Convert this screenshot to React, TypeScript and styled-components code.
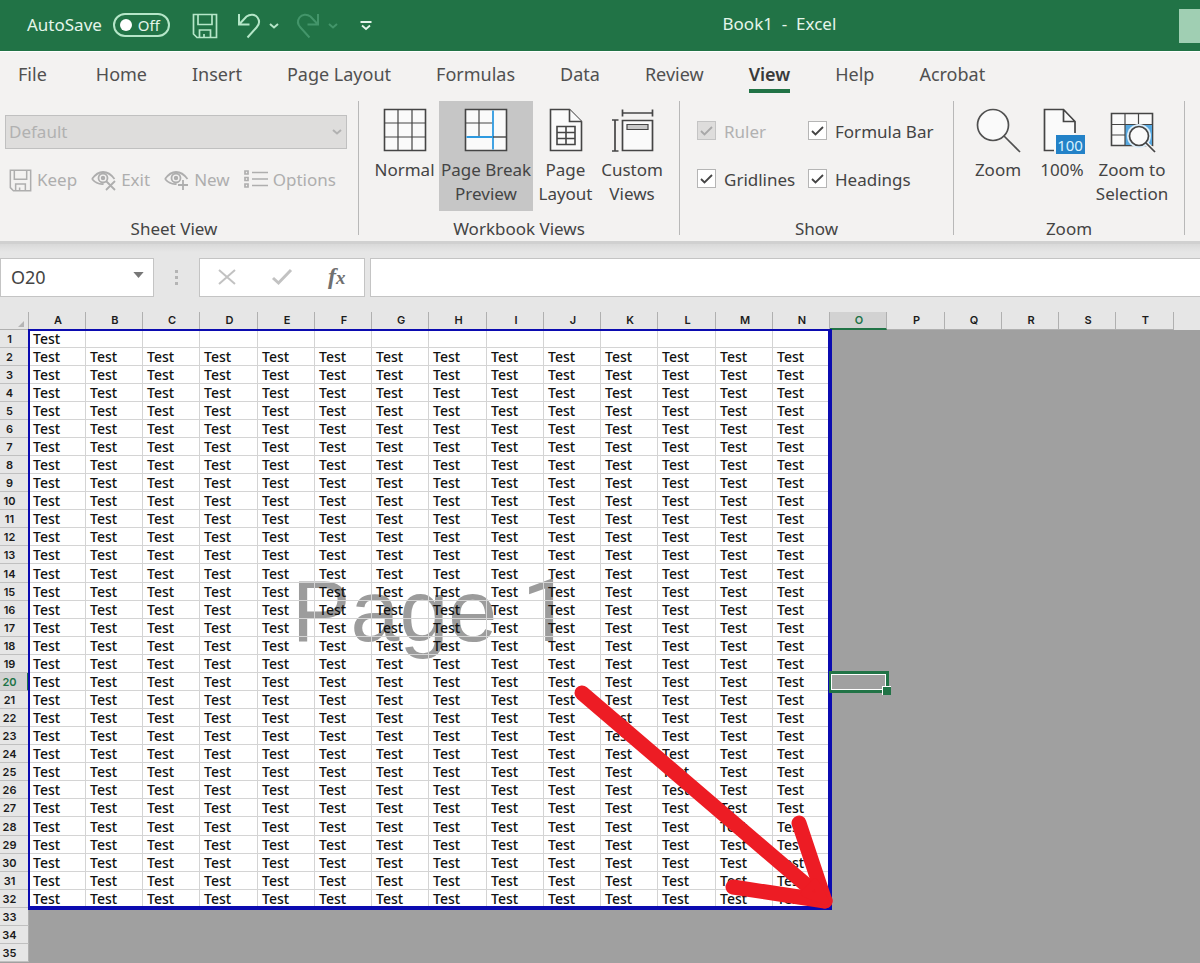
import React from "react";
import styled, { createGlobalStyle, css } from "styled-components";

const GlobalStyle = createGlobalStyle`
  *, *::before, *::after { box-sizing: border-box; }
  html, body { margin: 0; padding: 0; }
  body {
    font-family: "Noto Sans", "Open Sans", sans-serif;
    font-size: 17px;
    line-height: 24px;
    color: #444;
    overflow: hidden;
  }
  button, input, select { font: inherit; color: inherit; }
  svg { display: block; flex: none; overflow: visible; }
`;

const Page = styled.div`
  display: flex;
  flex-direction: column;
  height: 100vh;
  background: #e6e6e6;
`;

/* ---------- Title bar ---------- */

const TitleBar = styled.header`
  display: flex;
  align-items: center;
  height: 51px;
  background: #217346;
  color: #e4f5ea;
`;

const AutoSave = styled.label`
  display: flex;
  align-items: center;
  gap: 11px;
  padding: 0 0 2px 27px;
`;

const Switch = styled.button`
  display: flex;
  align-items: center;
  justify-content: space-between;
  width: 57px;
  height: 24px;
  padding: 0 8px 0 5px;
  border: 2px solid #b5e6c8;
  border-radius: 12px;
  background: transparent;
  font-size: 15px;
  line-height: 20px;
`;

const Knob = styled.span`
  width: 12px;
  height: 12px;
  border-radius: 50%;
  background: #fff;
`;

const QuickTools = styled.div`
  display: flex;
  align-items: center;
  padding-left: 22px;
`;

const QuickButton = styled.button<{ $gap?: number; $faded?: boolean }>`
  display: flex;
  padding: 0;
  margin-left: ${(p) => p.$gap ?? 0}px;
  border: 0;
  background: transparent;
  color: ${(p) => (p.$faded ? "#43956a" : "#b5e6c8")};
`;

const DocTitle = styled.h1`
  flex: 1;
  margin: 0;
  padding: 0 0 4px 8px;
  font-size: 17px;
  font-weight: 400;
  line-height: 24px;
  text-align: center;
  white-space: pre;
`;

const SearchStub = styled.div`
  width: 21px;
  height: 34px;
  background: #a0cfb3;
`;

/* ---------- Ribbon ---------- */

const Tabs = styled.nav`
  display: flex;
  align-items: flex-start;
  gap: 45px;
  height: 48px;
  padding: 10px 18px 0;
  border-top: 1px solid #fff;
  background: #f3f2f1;
  font-size: 18px;
`;

const Tab = styled.a<{ $active?: boolean }>`
  height: 31px;
  color: #505050;
  text-decoration: none;
  white-space: nowrap;
  &:first-child { margin-right: 4px; }
  ${(p) =>
    p.$active &&
    css`
      border-bottom: 4px solid #217346;
      color: #3a3a3a;
      font-weight: 600;
    `}
`;

const Ribbon = styled.div`
  display: flex;
  height: 145px;
  padding-top: 2px;
  border-bottom: 3px solid #d0d0d0;
  background: #f3f2f1;
`;

const Group = styled.section<{ $width: number }>`
  display: flex;
  flex-direction: column;
  width: ${(p) => p.$width}px;
  height: 134px;
  flex: none;
  border-right: 1px solid #b8b8b8;
`;

const GroupBody = styled.div<{ $pad?: number }>`
  display: flex;
  flex: 1;
  padding-left: ${(p) => p.$pad ?? 0}px;
`;

const GroupName = styled.h2<{ $shift?: number }>`
  margin: 0;
  padding-right: ${(p) => p.$shift ?? 0}px;
  font-size: 17px;
  font-weight: 400;
  line-height: 12px;
  text-align: center;
`;

const SheetViewBody = styled.div`
  flex: 1;
  padding: 14px 11px 0 5px;
`;

const SelectWrap = styled.div`
  display: grid;
  align-items: center;
  > * { grid-area: 1 / 1; }
  > svg { justify-self: end; margin-right: 5px; }
`;

const ViewSelect = styled.select`
  width: 100%;
  height: 34px;
  padding: 0 3px;
  appearance: none;
  border: 1px solid #c0c0c0;
  border-radius: 0;
  background: #dedddc;
  color: #b1b1b1;
  opacity: 1;
`;

const SheetActions = styled.div`
  display: flex;
  gap: 14px;
  padding: 19px 0 0 4px;
`;

const SheetAction = styled.button`
  display: flex;
  align-items: center;
  gap: 5px;
  padding: 0;
  border: 0;
  background: transparent;
  color: #aeaeae;
`;

const BigButton = styled.button<{ $width: number; $active?: boolean }>`
  display: flex;
  flex-direction: column;
  align-items: center;
  gap: 6px;
  width: ${(p) => p.$width}px;
  height: 110px;
  padding: 7px 0 0;
  border: 0;
  background: ${(p) => (p.$active ? "#c6c6c6" : "transparent")};
  line-height: 24px;
  white-space: pre;
`;

const Checks = styled.div`
  display: grid;
  grid-template-columns: 111px auto;
  grid-auto-rows: 24px;
  align-content: start;
  row-gap: 24px;
  padding-top: 19px;
`;

const CheckLabel = styled.label<{ $disabled?: boolean }>`
  display: flex;
  align-items: center;
  gap: 8px;
  white-space: nowrap;
  color: ${(p) => (p.$disabled ? "#b1b1b1" : "#444")};
`;

const CheckBoxWrap = styled.span`
  display: grid;
  place-items: center;
  margin-bottom: 3px;
  > * { grid-area: 1 / 1; }
  > svg { pointer-events: none; }
`;

const CheckInput = styled.input`
  width: 19px;
  height: 19px;
  margin: 0;
  appearance: none;
  border: 1px solid #b5b5b5;
  background: #fff;
  &:disabled { background: #dedddc; border-color: #c4c4c4; }
`;

/* ---------- Formula bar ---------- */

const FormulaBar = styled.div`
  display: flex;
  align-items: center;
  height: 68px;
  padding: 0 0 2px;
  background: linear-gradient(#d9d9d9, #e6e6e6 8px);
`;

const NameBox = styled.div`
  display: grid;
  align-items: center;
  width: 154px;
  > * { grid-area: 1 / 1; }
  > svg { justify-self: end; margin: 0 10px 4px 0; }
`;

const NameInput = styled.input`
  width: 100%;
  height: 39px;
  padding: 0 10px;
  border: 1px solid #c4c4c4;
  background: #fff;
  font-size: 18px;
`;

const Dots = styled.div`
  display: flex;
  flex-direction: column;
  align-items: center;
  gap: 3px;
  width: 45px;
`;

const Dot = styled.span`
  width: 3px;
  height: 3px;
  background: #b4b4b4;
`;

const FormulaTools = styled.div`
  display: flex;
  align-items: center;
  justify-content: space-around;
  width: 166px;
  height: 39px;
  margin-right: 5px;
  border: 1px solid #c4c4c4;
  background: #fff;
`;

const FormulaTool = styled.button`
  display: flex;
  justify-content: center;
  width: 30px;
  padding: 0;
  border: 0;
  background: transparent;
  color: #c2c2c2;
`;

const FxMark = styled.span`
  font-family: "Liberation Serif", serif;
  font-size: 24px;
  font-style: italic;
  font-weight: 700;
  line-height: 24px;
  color: #707070;
  small { font-size: 19px; }
`;

const FormulaInput = styled.input`
  flex: 1;
  min-width: 0;
  height: 39px;
  padding: 0 8px;
  border: 1px solid #c4c4c4;
  border-right: 0;
  background: #fff;
`;

/* ---------- Sheet ---------- */

const SheetArea = styled.main`
  position: relative;
  flex: 1;
  min-height: 0;
  overflow: hidden;
  background: linear-gradient(#e6e6e6 18px, #a0a0a0 18px);
`;

const Paper = styled.div`
  position: absolute;
  top: 18px;
  left: 28px;
  display: flex;
  align-items: center;
  justify-content: center;
  width: 803px;
  height: 579px;
  padding: 0 0 18px 4px;
  background: #fff;
  color: #9c9c9c;
  font-family: "Liberation Sans", sans-serif;
  font-size: 88px;
  line-height: 88px;
  white-space: pre;
`;

const PageNumber = styled.span`
  font-family: Roboto, sans-serif;
`;

const PrintBorder = styled.div`
  position: absolute;
  top: 17px;
  left: 28px;
  width: 804px;
  height: 581px;
  border: solid #0b0bb0;
  border-width: 2px 4px 4px 2px;
  pointer-events: none;
`;

const Grid = styled.table`
  position: relative;
  width: 1174px;
  table-layout: fixed;
  border-collapse: separate;
  border-spacing: 0;
`;

const GridCol = styled.col<{ $width: number }>`
  width: ${(p) => p.$width}px;
`;

const ColHead = styled.th<{ $selected?: boolean }>`
  height: 18px;
  padding: 0 0 0 2px;
  border-right: 1px solid #b0b0b0;
  border-bottom: 1px solid #b0b0b0;
  font-family: Inter, sans-serif;
  font-size: 11px;
  font-weight: 600;
  line-height: 17px;
  color: #1c1c1c;
  ${(p) =>
    p.$selected &&
    css`
      border-bottom: 2px solid #217346;
      background: #d2d2d2;
      color: #217346;
      line-height: 16px;
    `}
`;

const Corner = styled.th`
  padding: 0 4px 2px 0;
  border-right: 1px solid #b0b0b0;
  border-bottom: 1px solid #b0b0b0;
  vertical-align: bottom;
  svg { margin-left: auto; }
`;

const Row = styled.tr<{ $height: number }>`
  height: ${(p) => p.$height}px;
`;

const RowHead = styled.th<{ $selected?: boolean }>`
  padding: 2px 9px 0 0;
  border-right: 1px solid #b0b0b0;
  border-bottom: 1px solid #c0c0c0;
  background: #e6e6e6;
  font-family: Inter, sans-serif;
  font-size: 11px;
  font-weight: 600;
  line-height: 15px;
  color: #1c1c1c;
  ${(p) =>
    p.$selected &&
    css`
      padding-right: 8px;
      border-right: 2px solid #217346;
      background: #d2d2d2;
      color: #217346;
    `}
`;

const Cell = styled.td<{ $printed: boolean }>`
  padding: 0 0 0 4px;
  font-size: 14px;
  font-weight: 500;
  line-height: 17px;
  color: #111;
  ${(p) =>
    p.$printed &&
    css`
      border-right: 1px solid #d4d4d4;
      border-bottom: 1px solid #d4d4d4;
    `}
`;

const Selection = styled.div`
  position: absolute;
  top: 359px;
  left: 829px;
  width: 60px;
  height: 22px;
  border: 3px solid #217346;
  border-left-width: 2px;
  background: #a0a0a0;
  box-shadow: inset 0 0 0 1px #fff;
`;

const FillHandle = styled.span`
  position: absolute;
  right: -5px;
  bottom: -5px;
  width: 9px;
  height: 9px;
  border: solid #fff;
  border-width: 1px 0 0 1px;
  background: #217346;
`;

const ArrowDrawing = styled.svg`
  position: absolute;
  top: 360px;
  left: 560px;
`;

/* ---------- Icons ---------- */

const SaveIcon = ({ size = 26 }: { size?: number }) => (
  <svg width={size} height={size} viewBox="0 0 26 26" fill="none" stroke="currentColor" strokeWidth="1.700">
    <path d="M1.500 1.500h23v23H5l-3.500-3.500z" />
    <path d="M6 1.500v10h14v-10M7.500 24.500v-7.500h11v7.500M12 21v3.500" />
  </svg>
);

const Chevron = ({ color = "currentColor" }: { color?: string }) => (
  <svg width="10" height="6" viewBox="0 0 10 6" fill="none" stroke={color} strokeWidth="2">
    <path d="M1 1l4 3.500L9 1" />
  </svg>
);

const UndoIcon = ({ flip = false }: { flip?: boolean }) => (
  <svg width="24" height="26" viewBox="0 0 24 26" fill="none" stroke="currentColor" strokeWidth="2">
    <g transform={flip ? "translate(24 0) scale(-1 1)" : undefined}>
      <path d="M2 1v10.500h10.500M2.500 11L9.500 3.500C13 .8 18 1 20.500 4.500c2.500 3.500 1.800 7-1 10L10.500 24.500" />
    </g>
  </svg>
);

const CustomizeIcon = () => (
  <svg width="12" height="10" viewBox="0 0 12 10" fill="none" stroke="#e4f5ea" strokeWidth="1.800">
    <path d="M.5 1h11M2 4.500l4 3.500 4-3.500" />
  </svg>
);

const EyeIcon = ({ mark }: { mark: "x" | "plus" }) => (
  <svg width="25" height="22" viewBox="0 0 25 22" fill="none" stroke="currentColor" strokeWidth="1.800">
    <path d="M1 10C5 4.500 8.500 3 12 3s7.500 1.500 11.500 7M1 10c3.500 4 7 5.500 11.500 5" />
    <circle cx="12" cy="9" r="4.500" />
    <circle cx="12" cy="9" r="1.300" fill="currentColor" />
    {mark === "x" ? <path d="M15 12l9 9M24 12l-9 9" /> : <path d="M19 11v10M14 16h10" />}
  </svg>
);

const ListIcon = () => (
  <svg width="24" height="18" viewBox="0 0 24 18" fill="none" stroke="currentColor" strokeWidth="1.700">
    <path d="M1 0h3v3H1zM1 6.500h3v3H1zM1 13h3v3H1zM8 1.500h16M8 8h16M8 14.500h16" />
  </svg>
);

const NormalIcon = () => (
  <svg width="44" height="44" viewBox="0 0 44 44" fill="#fafafa" stroke="#454545">
    <path strokeWidth="1.600" d="M1.500 1.500h41v41h-41z" />
    <path strokeWidth="1.200" d="M15 1.500v41M29 1.500v41M1.500 15h41M1.500 29h41" />
  </svg>
);

const PageBreakIcon = () => (
  <svg width="44" height="44" viewBox="0 0 44 44" fill="#fafafa" stroke="#454545">
    <path strokeWidth="1.600" d="M1.500 1.500h41v41h-41z" />
    <path strokeWidth="1.200" d="M15 1.500v27M1.500 15h27" />
    <path stroke="#2e9ae0" strokeWidth="1.800" d="M29 2.500v39M2.500 29h26" />
    <path strokeWidth="1.400" d="M29 29h13" />
  </svg>
);

const PageLayoutIcon = () => (
  <svg width="34" height="44" viewBox="0 0 34 44" fill="#fafafa" stroke="#454545" strokeWidth="1.600">
    <path d="M1.500 1.500h19L32.500 13.500v29h-31z" />
    <path d="M20.500 1.500v12h12" />
    <path strokeWidth="1.600" d="M8 18.500h18v18H8zM8 24.500h18M8 30.500h18M17 18.500v18" />
  </svg>
);

const CustomViewsIcon = () => (
  <svg width="44" height="44" viewBox="0 0 44 44" fill="none" stroke="#454545" strokeWidth="1.700">
    <path fill="#fafafa" d="M12.500 12.500h30v30h-30z" />
    <path fill="#c8c8c8" strokeWidth="1.200" d="M17 16.500h21v5H17z" />
    <path d="M12.500 5h30M12.500 1.500v7M42.500 1.500v7M5 12v31M2 12h6.500M2 43h6.500" />
  </svg>
);

const ZoomIcon = () => (
  <svg width="44" height="44" viewBox="0 0 44 44" fill="#fafafa" stroke="#505050" strokeWidth="1.700">
    <circle cx="17" cy="17" r="15.500" />
    <path d="M28 28l16 16" />
  </svg>
);

const HundredIcon = () => (
  <svg width="38" height="44" viewBox="0 0 38 44" fill="#fafafa" stroke="#454545" strokeWidth="1.700">
    <path stroke="none" d="M2 2h18l12 11v30H2z" />
    <path fill="none" d="M11 42.500H1.500v-41h19L32 13.500V25M20.500 1.500v12H32" />
    <path fill="#2382c8" stroke="none" d="M13 27h29v19H13z" />
    <text x="27" y="43" fill="#d8f2ff" stroke="none" fontFamily="Noto Sans, sans-serif" fontSize="15" textAnchor="middle">100</text>
  </svg>
);

const ZoomSelectionIcon = () => (
  <svg width="44" height="44" viewBox="0 0 44 44" fill="#fafafa" stroke="#454545">
    <path strokeWidth="1.600" d="M1.500 5.500h41v32h-41z" />
    <path fill="#56a8e0" stroke="none" d="M15 17h27v20H15z" />
    <path strokeWidth="1.200" d="M15 5.500v32M28.500 5.500V17M1.500 16.500h41M1.500 27h13.500" />
    <circle cx="29" cy="28" r="12" fill="#dceefa" stroke="none" />
    <circle cx="29" cy="28" r="9.500" strokeWidth="1.700" />
    <path stroke="#f3f2f1" strokeWidth="4.500" d="M37 36l8 8" />
    <path strokeWidth="1.700" d="M36 35l9 9" />
  </svg>
);

const CheckMark = ({ color }: { color: string }) => (
  <svg width="13" height="10" viewBox="0 0 13 10" fill="none" stroke={color} strokeWidth="1.800">
    <path d="M1 5l3.500 3.500L12 1" />
  </svg>
);

/* ---------- Data ---------- */

const tabs = ["File", "Home", "Insert", "Page Layout", "Formulas", "Data", "Review", "View", "Help", "Acrobat"];
const columns = "ABCDEFGHIJKLMNOPQRST".split("");
const rows = Array.from({ length: 35 }, (_, i) => i + 1);
const printedColumns = 14;
const printedRows = 32;

const cellText = (row: number, col: number) =>
  col < printedColumns && row <= printedRows && (row > 1 || col === 0) ? "Test" : "";

const Check = ({ label, disabled }: { label: string; disabled?: boolean }) => (
  <CheckLabel $disabled={disabled}>
    <CheckBoxWrap>
      <CheckInput type="checkbox" defaultChecked disabled={disabled} />
      <CheckMark color={disabled ? "#a8a8a8" : "#444"} />
    </CheckBoxWrap>
    {label}
  </CheckLabel>
);

export default function App() {
  return (
    <Page>
      <GlobalStyle />
      <TitleBar>
        <AutoSave htmlFor="autosave">
          AutoSave
          <Switch id="autosave" type="button" role="switch" aria-checked={false}>
            <Knob />
            Off
          </Switch>
        </AutoSave>
        <QuickTools>
          <QuickButton aria-label="Save"><SaveIcon /></QuickButton>
          <QuickButton $gap={19} aria-label="Undo"><UndoIcon /></QuickButton>
          <QuickButton $gap={8} aria-label="Undo history"><Chevron /></QuickButton>
          <QuickButton $gap={17} $faded aria-label="Redo"><UndoIcon flip /></QuickButton>
          <QuickButton $gap={8} $faded aria-label="Redo history"><Chevron /></QuickButton>
          <QuickButton $gap={22} aria-label="Customize toolbar"><CustomizeIcon /></QuickButton>
        </QuickTools>
        <DocTitle>{"Book1  -  Excel"}</DocTitle>
        <SearchStub />
      </TitleBar>

      <Tabs>
        {tabs.map((name) => (
          <Tab key={name} href="#" $active={name === "View"}>{name}</Tab>
        ))}
      </Tabs>

      <Ribbon>
        <Group $width={359}>
          <SheetViewBody>
            <SelectWrap>
              <ViewSelect disabled aria-label="Sheet view">
                <option>Default</option>
              </ViewSelect>
              <Chevron color="#b1b1b1" />
            </SelectWrap>
            <SheetActions>
              <SheetAction disabled><SaveIcon size={23} />Keep</SheetAction>
              <SheetAction disabled><EyeIcon mark="x" />Exit</SheetAction>
              <SheetAction disabled><EyeIcon mark="plus" />New</SheetAction>
              <SheetAction disabled><ListIcon />Options</SheetAction>
            </SheetActions>
          </SheetViewBody>
          <GroupName $shift={10}>Sheet View</GroupName>
        </Group>

        <Group $width={321}>
          <GroupBody $pad={11}>
            <BigButton $width={69}><NormalIcon />Normal</BigButton>
            <BigButton $width={94} $active><PageBreakIcon />{"Page Break\nPreview"}</BigButton>
            <BigButton $width={65}><PageLayoutIcon />{"Page\nLayout"}</BigButton>
            <BigButton $width={68}><CustomViewsIcon />{"Custom\nViews"}</BigButton>
          </GroupBody>
          <GroupName>Workbook Views</GroupName>
        </Group>

        <Group $width={274}>
          <GroupBody $pad={17}>
            <Checks>
              <Check label="Ruler" disabled />
              <Check label="Formula Bar" />
              <Check label="Gridlines" />
              <Check label="Headings" />
            </Checks>
          </GroupBody>
          <GroupName>Show</GroupName>
        </Group>

        <Group $width={231}>
          <GroupBody $pad={12}>
            <BigButton $width={64}><ZoomIcon />Zoom</BigButton>
            <BigButton $width={64}><HundredIcon />100%</BigButton>
            <BigButton $width={76}><ZoomSelectionIcon />{"Zoom to\nSelection"}</BigButton>
          </GroupBody>
          <GroupName>Zoom</GroupName>
        </Group>
      </Ribbon>

      <FormulaBar>
        <NameBox>
          <NameInput aria-label="Name box" defaultValue="O20" />
          <svg width="11" height="6" viewBox="0 0 12 7" fill="#777"><path d="M0 0h12L6 7z" /></svg>
        </NameBox>
        <Dots><Dot /><Dot /><Dot /></Dots>
        <FormulaTools>
          <FormulaTool aria-label="Cancel">
            <svg width="18" height="16" viewBox="0 0 18 16" fill="none" stroke="currentColor" strokeWidth="2"><path d="M1 1l16 14M17 1L1 15" /></svg>
          </FormulaTool>
          <FormulaTool aria-label="Enter">
            <svg width="20" height="16" viewBox="0 0 20 16" fill="none" stroke="currentColor" strokeWidth="3"><path d="M1 9l5.500 5L19 1" /></svg>
          </FormulaTool>
          <FormulaTool aria-label="Insert function"><FxMark>f<small>x</small></FxMark></FormulaTool>
        </FormulaTools>
        <FormulaInput aria-label="Formula" />
      </FormulaBar>

      <SheetArea>
        <Paper><span>Page </span><PageNumber>1</PageNumber></Paper>
        <Grid>
          <colgroup>
            <GridCol $width={29} />
            {columns.map((c, i) => (
              <GridCol key={c} $width={i % 4 === 3 ? 58 : 57} />
            ))}
          </colgroup>
          <thead>
            <tr>
              <Corner aria-label="Select all">
                <svg width="6" height="6" viewBox="0 0 6 6" fill="#b4b4b4"><path d="M6 0v6H0z" /></svg>
              </Corner>
              {columns.map((c) => (
                <ColHead key={c} scope="col" $selected={c === "O"}>{c}</ColHead>
              ))}
            </tr>
          </thead>
          <tbody>
            {rows.map((r) => (
              <Row key={r} $height={r % 14 === 0 ? 19 : 18}>
                <RowHead scope="row" $selected={r === 20}>{r}</RowHead>
                {columns.map((c, i) => (
                  <Cell key={c} $printed={i < printedColumns && r <= printedRows}>{cellText(r, i)}</Cell>
                ))}
              </Row>
            ))}
          </tbody>
        </Grid>
        <PrintBorder />
        <Selection><FillHandle /></Selection>
        <ArrowDrawing width="280" height="250" viewBox="0 0 280 250" fill="none" stroke="#ed1c24" strokeWidth="15" strokeLinecap="round" strokeLinejoin="round">
          <path d="M22 21L265 229" />
          <path d="M239 151L265 229M173 215L265 229" />
          <path d="M255 211L265 229L245 221z" fill="#ed1c24" strokeWidth="8" />
        </ArrowDrawing>
      </SheetArea>
    </Page>
  );
}
